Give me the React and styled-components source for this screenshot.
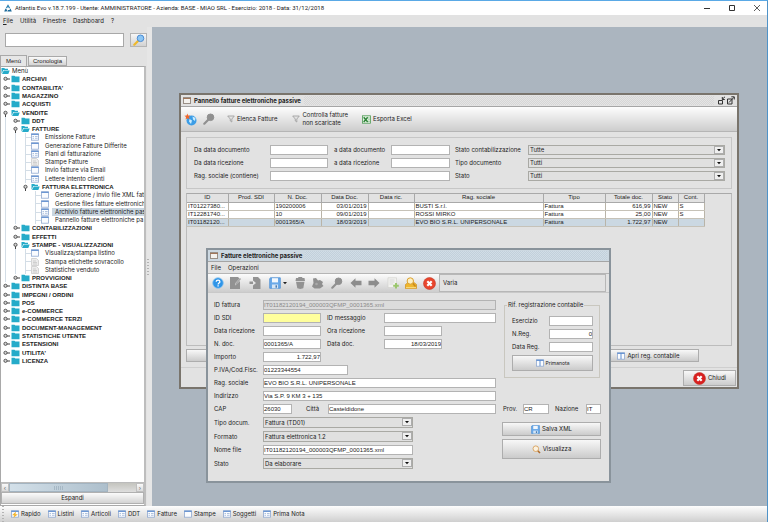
import React from 'react';
import styled, {createGlobalStyle} from 'styled-components';

const GlobalStyle = createGlobalStyle`
    * { box-sizing: border-box; }
    body { margin: 0; background: #e2e2e2; }
    body, button, input, select {
        font-family: Inter, "Liberation Sans", Arial, sans-serif;
        font-size: 6px;
        line-height: 8px;
        color: #222;
    }
    button, input, select { margin: 0; padding: 0; border-radius: 0; }
`;

const Page = styled.div`
    height: 100vh;
    display: flex;
    flex-direction: column;
    border-top: 1px solid #5aa9e6;
    border-right: 1px solid #4f93c8;
    overflow: hidden;
`;

const TitleBar = styled.header`
    flex: none;
    height: 14px;
    padding: 0 6px 0 4px;
    display: flex;
    align-items: center;
    gap: 3px;
    background: #fff;
    font-family: Roboto, "Open Sans", sans-serif;
`;

const WindowControls = styled.div`
    margin-left: auto;
    display: flex;
    gap: 17px;
`;

const ControlButton = styled.button`
    width: 8px;
    height: 8px;
    display: flex;
    background: none;
    border: 0;
`;

const MenuBar = styled.nav`
    flex: none;
    height: ${p => p.$height || 12}px;
    padding: 0 3px;
    display: flex;
    align-items: center;
    gap: 7px;
    background: #e2e2e2;
`;

const MenuLink = styled.button`
    background: none;
    border: 0;
    u { text-underline-offset: 1px; }
`;

const Main = styled.main`
    flex: 1;
    min-height: 0;
    display: flex;
`;

/* ---------- sidebar ---------- */

const Sidebar = styled.aside`
    flex: none;
    width: 147px;
    display: flex;
    flex-direction: column;
    background: #e2e2e2;
`;

const SearchRow = styled.form`
    flex: none;
    padding: 6px 0 8px 5px;
    display: flex;
    gap: 6px;
`;

const SearchInput = styled.input`
    flex: 1;
    min-width: 0;
    height: 14px;
    border: 1px solid #a8a8a8;
    background: #fff;
`;

const IconButton = styled.button`
    width: 17px;
    height: 14px;
    display: flex;
    align-items: center;
    justify-content: center;
    border: 1px solid #b4b4b4;
    background: linear-gradient(#f6f6f6, #d2d2d2);
`;

const Tabs = styled.div`
    flex: none;
    display: flex;
    align-items: flex-end;
    gap: 1px;
`;

const Tab = styled.button`
    height: ${p => p.$active ? '11px' : '10px'};
    padding: 0 ${p => p.$active ? 5 : 4}px;
    border: 1px solid #a9a9a9;
    border-bottom-width: ${p => p.$active ? 0 : '1px'};
    background: ${p => p.$active ? '#e6e6e6' : 'linear-gradient(#fafafa, #d4d4d4)'};
    font-family: "Liberation Sans", Arial, sans-serif;
`;

const TreePanel = styled.div`
    flex: 1;
    min-height: 0;
    margin-right: 1px;
    padding-bottom: 1px;
    display: flex;
    flex-direction: column;
    background: #fff;
    border: 1px solid #a9a9a9;
    border-right: 2px solid #bdbdbd;
    overflow: hidden;
`;

const Tree = styled.ul`
    height: 298px;
    margin: 0 0 auto;
    padding: 0;
    display: grid;
    grid-auto-rows: 1fr;
    list-style: none;
`;

const TreeItem = styled.li`
    min-height: 0;
    display: flex;
    align-items: center;
    white-space: nowrap;
    ${p => p.$folder && `
        font-family: "Liberation Sans", Arial, sans-serif;
        font-weight: bold;
    `}
    svg { flex: none; }
`;

const TreeGuide = styled.span`
    flex: none;
    align-self: stretch;
    width: 10px;
    ${p => p.$line && `
        background: linear-gradient(#d3dde6, #d3dde6) 4px 0 / 1px 100% no-repeat;
    `}
`;

const TreeBranch = styled(TreeGuide)`
    background:
        linear-gradient(#d3dde6, #d3dde6) 4px 0 / 1px 100% no-repeat,
        linear-gradient(#d3dde6, #d3dde6) 4px 4px / 6px 1px no-repeat;
`;

const TreeText = styled.span`
    margin-left: ${p => p.$leaf ? '3px' : '1px'};
    padding-left: ${p => p.$leaf ? '3px' : '1px'};
    ${p => p.$selected && `
        flex: 1;
        background: #c9d6e0;
    `}
`;

const ScrollBar = styled.div`
    flex: none;
    height: 10px;
    display: flex;
    border-top: 1px solid #bbb;
    background: linear-gradient(#c4c4be, #dedede);
`;

const ScrollThumb = styled.div`
    width: 99px;
    display: flex;
    align-items: center;
    justify-content: center;
    border: 1px solid #a3b4c1;
    background: linear-gradient(90deg, #d3e0e9, #adbfcc);
`;

const ThumbGrip = styled.span`
    width: 10px;
    height: 4px;
    background: repeating-linear-gradient(90deg, #a6b8c5 0 1px, transparent 1px 2px);
`;

const ScrollButton = styled.button`
    flex: none;
    width: 8px;
    margin-left: ${p => p.$end ? 'auto' : 0};
    border: 1px solid #bfbfbf;
    background: linear-gradient(#fafafa, #dadada);
    color: #666;
    line-height: 6px;
`;

const ExpandButton = styled.button`
    flex: none;
    height: 12px;
    border: 1px solid #b0b0b0;
    background: linear-gradient(#fbfbfb, #d3d3d3);
`;

const Splitter = styled.div`
    flex: none;
    width: 5px;
    display: flex;
    align-items: center;
    background: #e6e6e6;
`;

const Grip = styled.span`
    width: 2px;
    height: 16px;
    background: repeating-linear-gradient(#b3b3b3 0 1px, transparent 1px 3px);
`;

/* ---------- desktop and inner windows ---------- */

const Desktop = styled.section`
    flex: 1;
    position: relative;
    background: #abb5bf;
    overflow: hidden;
`;

const InnerWindow = styled.section`
    position: absolute;
    left: ${p => p.$x}px;
    top: ${p => p.$y}px;
    width: ${p => p.$width}px;
    display: flex;
    flex-direction: column;
    border: 2px solid ${p => p.$active ? '#89939b' : '#79746c'};
    background: #e2e2e2;
`;

const InnerTitle = styled.header`
    height: 12px;
    padding: 0 2px;
    display: flex;
    align-items: center;
    gap: 3px;
    border-bottom: 1px solid #a5a5a5;
    background: ${p => p.$active ? '#ccd8e1' : '#e2e2e2'};
    h2 {
        margin: 0;
        font-size: 6px;
        line-height: 8px;
    }
`;

const TitleTexture = styled.span`
    flex: 1;
    height: 9px;
    background: repeating-conic-gradient(${p => p.$active ? '#c2d0db 0 25%, #d1dde6 0 50%' : '#d6d6d6 0 25%, #e4e4e4 0 50%'}) 0 0 / 2px 2px;
`;

const ToolBar = styled.div`
    height: 25px;
    padding: 0 3px;
    display: flex;
    align-items: center;
    border-bottom: 1px solid #b5b5b5;
    background: linear-gradient(#fdfdfd, #cdcdcd);
`;

const ToolButton = styled.button`
    margin-left: ${p => p.$gap || 0}px;
    display: flex;
    align-items: center;
    gap: 2px;
    border: 0;
    background: none;
    text-align: left;
    white-space: nowrap;
`;

const PanelBody = styled.div`
    padding: 5px;
    display: flex;
    flex-direction: column;
`;

const FilterBox = styled.form`
    padding: 7px 6px 7px 7px;
    display: grid;
    grid-template-columns: 76px 58px 63px 59px 78px 1fr;
    grid-auto-rows: 10px;
    row-gap: 3px;
    align-items: center;
    border: 1px solid #c6c6c6;
`;

const FieldLabel = styled.label`
    flex: none;
    width: ${p => p.$width ? `${p.$width}px` : 'auto'};
    padding-left: ${p => p.$pad || 0}px;
    white-space: nowrap;
`;

const TextInput = styled.input`
    height: 10px;
    min-width: 0;
    width: ${p => p.$width ? `${p.$width}px` : '100%'};
    flex: ${p => p.$width ? 'none' : 1};
    grid-column: ${p => p.$span ? `span ${p.$span}` : 'auto'};
    border: 1px solid #b3b3b3;
    background: ${p => p.$fill || '#fff'};
    color: ${p => p.readOnly ? '#8a8a8a' : '#222'};
    text-align: ${p => p.$right ? 'right' : 'left'};
    font-family: "Liberation Sans", Arial, sans-serif;
`;

const SelectWrap = styled.span`
    position: relative;
    display: flex;
    width: ${p => p.$width ? `${p.$width}px` : '100%'};
    svg {
        position: absolute;
        right: 1px;
        top: 1px;
        pointer-events: none;
    }
`;

const SelectInput = styled.select`
    width: 100%;
    height: ${p => p.$tall ? 11 : 10}px;
    padding-left: 1px;
    appearance: none;
    border: 1px solid #a9a9a4;
    background: #e0e0e0;
`;

const TablePane = styled.div`
    height: 153px;
    margin-top: 4px;
    border: 1px solid #bcbcbc;
    border-top-color: #a9a9a9;
`;

const Table = styled.table`
    width: 517px;
    table-layout: fixed;
    border-collapse: collapse;
    font-family: "Liberation Sans", Arial, sans-serif;
    th, td {
        height: 8px;
        padding: 0 1px;
        line-height: 7px;
        border-right: 1px solid #b9b4a8;
        border-bottom: 1px solid #c6c2b8;
        overflow: hidden;
        white-space: nowrap;
    }
    th {
        font-weight: normal;
        border-color: #a9a9a9;
        background: #e2e2e2;
    }
`;

const TableRow = styled.tr`
    background: ${p => p.$selected ? '#cbd8e2' : '#fff'};
`;

const Cell = styled.td`
    text-align: ${p => p.$right ? 'right' : 'left'};
`;

const ActionRow = styled.div`
    margin-top: 3px;
    padding-right: 33px;
    display: flex;
    justify-content: space-between;
`;

const PushButton = styled.button`
    width: ${p => p.$width ? `${p.$width}px` : '100%'};
    height: ${p => p.$height}px;
    display: flex;
    align-items: center;
    justify-content: center;
    gap: 2px;
    border: 1px solid #adadad;
    background: linear-gradient(#f8f8f8, #cbcbcb);
    font-size: ${p => p.$small ? 5 : 6}px;
`;

const WindowFooter = styled.footer`
    height: 20px;
    padding: 2px 1px 1px;
    display: flex;
    justify-content: flex-end;
    border-top: 1px solid #cfcfcf;
`;

const FormToolBar = styled.div`
    height: 20px;
    padding-right: 3px;
    display: flex;
    border-top: 1px solid #b5b5b5;
    border-bottom: 1px solid #c9c9c9;
`;

const FormTools = styled.div`
    width: 231px;
    padding-left: 4px;
    display: grid;
    grid-template-columns: 12px 22px 17px 29px 16px 19px 19px 19px 18px 20px 16px 20px;
    align-items: center;
    justify-items: center;
    background: linear-gradient(#fcfcfc, #cdcdcd);
`;

const StatusBox = styled.div`
    flex: 1;
    padding: 4px 3px;
    border: 1px solid #b7b7b7;
`;

const FormBody = styled.div`
    padding: 7px 8px 12px 6px;
    display: flex;
    gap: 6px;
`;

const FormColumn = styled.form`
    flex: 1;
    min-width: 0;
    display: flex;
    flex-direction: column;
    gap: 3px;
`;

const FormRow = styled.div`
    display: flex;
    align-items: center;
`;

const SideColumn = styled.div`
    width: 99px;
    padding-top: 1px;
    display: flex;
    flex-direction: column;
`;

const GroupBox = styled.fieldset`
    min-width: 0;
    margin: 0 1px 26px 2px;
    padding: 7px 6px 6px 7px;
    display: flex;
    flex-direction: column;
    gap: 3px;
    border: 1px solid #c9c7bf;
    legend {
        margin-left: -5px;
        padding: 0 1px;
    }
`;

const ButtonStack = styled.div`
    margin-top: 8px;
    display: flex;
    flex-direction: column;
    gap: 3px;
`;

/* ---------- bottom bar ---------- */

const TaskBar = styled.footer`
    flex: none;
    height: 16px;
    padding-left: 2px;
    display: flex;
    align-items: center;
    gap: 7px;
    background: linear-gradient(#fdfdfd, #cfcfcf);
`;

/* ---------- icons ---------- */

const Logo = () => (
    <svg width="8" height="8" viewBox="0 0 8 8">
        <path d="M4 .3 6.300 4.300H4.900L4 2.700 3.100 4.300H1.700Z" fill="#2b7fb0" />
        <path d="M1.500 4.400 3.200 6 2.600 7.600H.2ZM6.500 4.400 7.800 7.600H3.200L4 5.900H5.400Z" fill="#1f6c9c" />
    </svg>
);

const Folder = ({open}) => (
    <svg width="9" height="8" viewBox="0 0 9 8">
        {open
            ? <path d="M.5 6.500V1H3.300L4 1.800H7V3H2.300L1 6ZM2.800 3.500H8.700L7.300 7H1Z" fill="#25abc9" />
            : <path d="M.5 .7H3.500L4.300 1.600H8.500V7.200H.5Z" fill="#25abc9" />}
    </svg>
);

const Handle = ({open}) => (
    <svg width="10" height="8" viewBox="0 0 10 8">
        <path d={open ? 'M4.500 5V8' : 'M6 4H9'} stroke="#444" />
        <circle cx="4.500" cy="3.800" r="1.600" fill="#d2d2d2" stroke="#4a4a4a" strokeWidth=".9" />
    </svg>
);

const FormIcon = ({kind = 'list'}) => (
    <svg width="8" height="8" viewBox="0 0 8 8">
        {kind === 'paper' ? (
            <>
                <path d="M.5.5H5.500L7.500 2.500V7.500H.5Z" fill="#ececec" stroke="#c6c6c6" strokeWidth=".7" />
                <path d="M2 3H5M2 4.500H6M2 6H6" stroke="#bcbcbc" strokeWidth=".6" />
            </>
        ) : (
            <>
                <rect x=".5" y=".8" width="7" height="6.400" fill="#fafcff" stroke="#8fa9d0" strokeWidth=".8" />
                <path d="M.3 1.300H7.700" stroke="#5f8ed0" strokeWidth="1.200" />
                {kind === 'list' && <path d="M1.500 3.500H3M1.500 5.300H3M4 3.500H6.600M4 5.300H6.600" stroke="#9db4d6" strokeWidth=".8" />}
                {kind === 'split' && <path d="M4 1V7" stroke="#5f8ed0" />}
                {kind === 'flash' && <path d="M5 1.500 1 5.200H3.300L2.300 8 6.900 4.200H4.500Z" fill="#f5b52a" />}
            </>
        )}
    </svg>
);

const WindowIcon = () => (
    <svg width="8" height="7" viewBox="0 0 8 7">
        <rect x=".5" y=".5" width="7" height="6" fill="#f4f2ee" stroke="#998f86" />
        <path d="M0 1.500H8" stroke="#a0765a" />
    </svg>
);

const Magnifier = ({size = 12, color = '#909090', glass = '#909090', handle = color}) => (
    <svg width={size} height={size} viewBox="0 0 12 12">
        <path d="M1.300 10.700 5.500 6.500" stroke={handle} strokeWidth="2.200" strokeLinecap="round" />
        <circle cx="7.500" cy="4.300" r="3.300" fill={glass} stroke={color} />
    </svg>
);

const LensIcon = () => (
    <svg width="9" height="9" viewBox="0 0 9 9">
        <path d="M5.500 5.500 8 8" stroke="#b06c2c" strokeWidth="1.600" />
        <circle cx="3.800" cy="3.700" r="2.800" fill="#fbf2e0" stroke="#d8a05c" strokeWidth=".9" />
    </svg>
);

const StarGlobe = () => (
    <svg width="13" height="13" viewBox="0 0 13 13">
        <circle cx="7.500" cy="7.500" r="5" fill="#3c9de6" />
        <path d="M5.500 6 8 7.500 7 11 5 8.500ZM8.500 3.500 11.500 5 11 8 9 6.500Z" fill="#c9ecff" />
        <path d="M3.300.5 4.200 2.500 6.300 2.400 4.900 4.100 5.600 6.200 3.500 5.200 1.600 6.400 2 4.100.4 2.700 2.600 2.500Z" fill="#f0662a" />
    </svg>
);

const Funnel = () => (
    <svg width="8" height="8" viewBox="0 0 8 8">
        <path d="M.7 1H7.300L4.800 4V7L3.300 6V4Z" fill="#e4e4e4" stroke="#9b9b9b" strokeWidth=".8" />
    </svg>
);

const ExcelIcon = () => (
    <svg width="9" height="9" viewBox="0 0 9 9">
        <rect x=".5" y=".8" width="8" height="7.400" fill="#e6f3e6" stroke="#4c9a52" strokeWidth=".8" />
        <path d="M6 3H8M6 4.700H8M6 6.400H8" stroke="#7fb884" strokeWidth=".6" />
        <path d="M1.700 2.300 5.700 6.900M5.700 2.300 1.700 6.900" stroke="#2f8439" strokeWidth="1.500" />
    </svg>
);

const HelpIcon = () => (
    <svg width="12" height="12" viewBox="0 0 12 12">
        <circle cx="6" cy="6" r="5.300" fill="#2f95e8" stroke="#8cc4ef" strokeWidth=".8" />
        <path d="M4.200 4.700C4.200 2.600 7.900 2.600 7.900 4.700 7.900 6 6.100 6 6.100 7.400M6.100 8.300V9.500" fill="none" stroke="#fff" strokeWidth="1.300" />
    </svg>
);

const EditIcon = () => (
    <svg width="12" height="12" viewBox="0 0 12 12">
        <path d="M1 0H9L10.500 1.500 6 6.500V8.500L11 4V12H1Z" fill="#929292" />
        <path d="M6.500 7.500 11.500 1.500" stroke="#a5a5a5" strokeWidth="1.300" />
    </svg>
);

const CopyIcon = () => (
    <svg width="12" height="12" viewBox="0 0 12 12">
        <path d="M4 0H9L11.500 2.500V12H4V8.500L7 6 4 3.500V4.500H.5V7H4Z" fill="#939393" />
    </svg>
);

const SaveIcon = ({size = 12}) => (
    <svg width={size} height={size} viewBox="0 0 12 12">
        <path d="M1.500.8H11.300V11.300H.7V1.600Z" fill="#6aa9e8" stroke="#4f90d4" strokeWidth=".8" />
        <rect x="3" y="1.200" width="6" height="4.200" fill="#f3f8fd" />
        <rect x="3" y="7.500" width="6" height="3.800" fill="#d4e5f5" />
        <rect x="6.500" y="8.300" width="1.500" height="2.400" fill="#4e7cae" />
    </svg>
);

const CaretIcon = () => (
    <svg width="4" height="3" viewBox="0 0 4 3">
        <path d="M0 0H4L2 2.300Z" fill="#222" />
    </svg>
);

const TrashIcon = () => (
    <svg width="12" height="12" viewBox="0 0 12 12">
        <path d="M2 1H4L4.500 0H8L8.500 1H10.500L11 4H1.500ZM2 4.700H10.500L9.300 11.300 6.200 12 3.300 11.300Z" fill="#929292" />
    </svg>
);

const ClusterIcon = () => (
    <svg width="13" height="12" viewBox="0 0 13 12">
        <path d="M2 1.500 5 1 7 3.500 9 3 12 5 11 7 12.500 9 9 11.500H3.500L1 9.500 2.500 6Z" fill="#8f8f8f" />
        <circle cx="5.500" cy="7" r="1.300" fill="#a9a9a9" />
    </svg>
);

const ArrowIcon = ({right}) => (
    <svg width="12" height="10" viewBox="0 0 12 10">
        <path d={right ? 'M11.500 5 6.500.3V2.800H.5V7.200H6.500V9.700Z' : 'M.5 5 5.500.3V2.800H11.500V7.200H5.500V9.700Z'} fill="#8d8d8d" />
    </svg>
);

const NoteIcon = () => (
    <svg width="12" height="12" viewBox="0 0 12 12">
        <path d="M1 .8H9.500V10.500H1Z" fill="#f2f2f0" stroke="#d2d2cf" strokeWidth=".7" />
        <path d="M2.500 3H7.500M2.500 5H7.500M2.500 7H6" stroke="#cfcfcf" strokeWidth=".7" />
        <path d="M9 6V11.500M6.200 8.800H11.800" stroke="#9ac66c" strokeWidth="1.900" />
    </svg>
);

const MailIcon = () => (
    <svg width="12" height="12" viewBox="0 0 12 12">
        <path d="M.5 7.500 3 5.500H9L11.500 7.500V11.500H.5Z" fill="#f0b72e" stroke="#cf8e1a" strokeWidth=".7" />
        <path d="M7.500 6 10.500 9.500" stroke="#c98a1c" strokeWidth="1.500" />
        <circle cx="5.300" cy="4" r="3.200" fill="#fdf0c4" stroke="#dba02c" />
        <path d="M1 10.700H11" stroke="#fbe08a" />
    </svg>
);

const CloseIcon = ({size = 13, fill = '#e8452c'}) => (
    <svg width={size} height={size} viewBox="0 0 13 13">
        <circle cx="6.500" cy="6.500" r="6" fill={fill} stroke="#c43a2c" strokeWidth=".6" />
        <path d="M4.300 4.300 8.700 8.700M8.700 4.300 4.300 8.700" stroke="#fff" strokeWidth="2.200" />
    </svg>
);

const SelectArrow = () => (
    <svg width="10" height="8" viewBox="0 0 10 8">
        <rect x=".5" y=".5" width="9" height="7" fill="#efefef" stroke="#adadad" />
        <path d="M3 3H7L5 5.300Z" fill="#111" />
    </svg>
);

const ResizeIcons = () => (
    <svg width="18" height="9" viewBox="0 0 18 9">
        <path d="M1.500 4.500H5.500V8H1.500ZM5 3.500 8 .8M5.300 1V3.500H7.800" fill="none" stroke="#333" />
        <path d="M10.500 3H15V8H10.500ZM12 6.500 17 1.200M14.300.8H17.300V3.500" fill="none" stroke="#333" />
    </svg>
);

/* ---------- data ---------- */

const TREE = [
    [1, 'ARCHIVI'],
    [1, 'CONTABILITA\''],
    [1, 'MAGAZZINO'],
    [1, 'ACQUISTI'],
    [1, 'VENDITE', 'open'],
    [2, 'DDT'],
    [2, 'FATTURE', 'open'],
    [3, 'Emissione Fatture', 'list'],
    [3, 'Generazione Fatture Differite', 'blank'],
    [3, 'Piani di fatturazione', 'list'],
    [3, 'Stampe Fatture', 'paper'],
    [3, 'Invio fatture via Email', 'blank'],
    [3, 'Lettere intento clienti', 'list'],
    [3, 'FATTURA ELETTRONICA', 'open'],
    [4, 'Generazione / invio file XML fatt', 'blank'],
    [4, 'Gestione files fatture elettronich', 'blank'],
    [4, 'Archivio fatture elettroniche pas', 'list'],
    [4, 'Pannello fatture elettroniche pa', 'blank'],
    [2, 'CONTABILIZZAZIONI'],
    [2, 'EFFETTI'],
    [2, 'STAMPE - VISUALIZZAZIONI', 'open'],
    [3, 'Visualizza/stampa listino', 'blank'],
    [3, 'Stampa etichette sovracollo', 'paper'],
    [3, 'Statistiche venduto', 'paper'],
    [2, 'PROVVIGIONI'],
    [1, 'DISTINTA BASE'],
    [1, 'IMPEGNI / ORDINI'],
    [1, 'POS'],
    [1, 'e-COMMERCE'],
    [1, 'e-COMMERCE TERZI'],
    [1, 'DOCUMENT-MANAGEMENT'],
    [1, 'STATISTICHE UTENTE'],
    [1, 'ESTENSIONI'],
    [1, 'UTILITA\''],
    [1, 'LICENZA'],
];

const SELECTED = 'Archivio fatture elettroniche pas';

const COLUMNS = [
    ['ID', 41], ['Prod. SDI', 46], ['N. Doc.', 47], ['Data Doc.', 47], ['Data ric.', 46],
    ['Rag. sociale', 129], ['Tipo', 62], ['Totale doc.', 47], ['Stato', 26], ['Cont.', 26],
];

const ROWS = [
    ['IT01227380...', '', '190200006', '03/01/2019', '', 'BUSTI S.r.l.', 'Fattura', '616,99', 'NEW', 'S'],
    ['IT12281740...', '', '10', '09/01/2019', '', 'ROSSI MIRKO', 'Fattura', '25,00', 'NEW', 'S'],
    ['IT01182120...', '', '0001365/A', '18/03/2019', '', 'EVO BIO S.R.L. UNIPERSONALE', 'Fattura', '1.722,97', 'NEW', ''],
];

const TASKS = [
    ['Rapido', 'flash'], ['Listini', 'list'], ['Articoli', 'list'], ['DDT', 'list'],
    ['Fatture', 'list'], ['Stampe', 'blank'], ['Soggetti', 'list'], ['Prima Nota', 'list'],
];

/* ---------- parts ---------- */

const Field = ({id, label, width, labelWidth = 49, pad, ...rest}) => (
    <>
        <FieldLabel htmlFor={id} $width={labelWidth} $pad={pad}>{label}</FieldLabel>
        <TextInput id={id} $width={width} {...rest} />
    </>
);

const SelectField = ({id, label, value, width, labelWidth, pad, tall}) => (
    <>
        <FieldLabel htmlFor={id} $width={labelWidth} $pad={pad}>{label}</FieldLabel>
        <SelectWrap $width={width}>
            <SelectInput id={id} $tall={tall} defaultValue={value}>
                <option>{value}</option>
            </SelectInput>
            <SelectArrow />
        </SelectWrap>
    </>
);

const TreeRow = ({level, label, kind}) => {
    const folder = !kind || kind === 'open';
    const guides = [];
    for (let i = 1; i < level; i++) guides.push(<TreeGuide key={i} $line={i < 3} />);
    return (
        <TreeItem $folder={folder}>
            {guides}
            {folder ? <Handle open={kind === 'open'} /> : <TreeBranch />}
            {folder ? <Folder open={kind === 'open'} /> : <FormIcon kind={kind} />}
            <TreeText $leaf={!folder} $selected={label === SELECTED}>{label}</TreeText>
        </TreeItem>
    );
};

const SidePanel = () => (
    <Sidebar>
        <SearchRow>
            <SearchInput aria-label="Cerca" />
            <IconButton type="button" aria-label="Cerca">
                <Magnifier color="#4b8bd3" glass="#8cc6f4" handle="#efb92c" />
            </IconButton>
        </SearchRow>
        <Tabs>
            <Tab $active>Menù</Tab>
            <Tab>Cronologia</Tab>
        </Tabs>
        <TreePanel>
            <Tree>
                <TreeItem>
                    <Folder open />
                    <TreeText>Menù</TreeText>
                </TreeItem>
                {TREE.map(([level, label, kind]) => (
                    <TreeRow key={label} level={level} label={label} kind={kind} />
                ))}
            </Tree>
            <ScrollBar>
                <ScrollButton aria-label="Indietro">‹</ScrollButton>
                <ScrollThumb><ThumbGrip /></ScrollThumb>
                <ScrollButton $end aria-label="Avanti">›</ScrollButton>
            </ScrollBar>
            <ExpandButton>Espandi</ExpandButton>
        </TreePanel>
    </Sidebar>
);

const InvoicePanel = () => (
    <InnerWindow $x={27} $y={66} $width={560}>
        <InnerTitle>
            <WindowIcon />
            <h2>Pannello fatture elettroniche passive</h2>
            <TitleTexture />
            <ResizeIcons />
        </InnerTitle>
        <ToolBar>
            <ToolButton aria-label="Nuovo"><StarGlobe /></ToolButton>
            <ToolButton $gap={6} aria-label="Cerca"><Magnifier /></ToolButton>
            <ToolButton $gap={12}><Funnel />Elenca Fatture</ToolButton>
            <ToolButton $gap={15}><Funnel /><span>Controlla fatture<br />non scaricate</span></ToolButton>
            <ToolButton $gap={14}><ExcelIcon />Esporta Excel</ToolButton>
        </ToolBar>
        <PanelBody>
            <FilterBox>
                <Field id="f-doc-from" label="Da data documento" />
                <Field id="f-doc-to" label="a data documento" pad={6} />
                <SelectField id="f-cont" label="Stato contabilizzazione" value="Tutte" pad={5} />
                <Field id="f-ric-from" label="Da data ricezione" />
                <Field id="f-ric-to" label="a data ricezione" pad={6} />
                <SelectField id="f-type" label="Tipo documento" value="Tutti" pad={5} />
                <Field id="f-name" label="Rag. sociale (contiene)" $span={3} />
                <SelectField id="f-state" label="Stato" value="Tutti" pad={5} />
            </FilterBox>
            <TablePane>
                <Table>
                    <colgroup>
                        {COLUMNS.map(([name, width]) => <col key={name} width={width} />)}
                    </colgroup>
                    <thead>
                        <tr>{COLUMNS.map(([name]) => <th key={name}>{name}</th>)}</tr>
                    </thead>
                    <tbody>
                        {ROWS.map((row, r) => (
                            <TableRow key={row[0]} $selected={r === 2}>
                                {row.map((text, c) => <Cell key={c} $right={c === 3 || c === 7}>{text}</Cell>)}
                            </TableRow>
                        ))}
                    </tbody>
                </Table>
            </TablePane>
            <ActionRow>
                <PushButton $width={101} $height={13} aria-label="Apri fattura" />
                <PushButton $width={101} $height={13}><FormIcon kind="split" />Apri reg. contabile</PushButton>
            </ActionRow>
        </PanelBody>
        <WindowFooter>
            <PushButton $width={53} $height={16}><CloseIcon fill="#d81f1f" />Chiudi</PushButton>
        </WindowFooter>
    </InnerWindow>
);

const InvoiceForm = () => (
    <InnerWindow $x={54} $y={221} $width={405} $active>
        <InnerTitle $active>
            <WindowIcon />
            <h2>Fatture elettroniche passive</h2>
            <TitleTexture $active />
        </InnerTitle>
        <MenuBar $height={11}>
            <MenuLink>File</MenuLink>
            <MenuLink>Operazioni</MenuLink>
        </MenuBar>
        <FormToolBar>
            <FormTools>
                <ToolButton aria-label="Aiuto"><HelpIcon /></ToolButton>
                <ToolButton aria-label="Modifica"><EditIcon /></ToolButton>
                <ToolButton aria-label="Copia"><CopyIcon /></ToolButton>
                <ToolButton aria-label="Salva"><SaveIcon /><CaretIcon /></ToolButton>
                <ToolButton aria-label="Elimina"><TrashIcon /></ToolButton>
                <ToolButton aria-label="Strumenti"><ClusterIcon /></ToolButton>
                <ToolButton aria-label="Cerca"><Magnifier /></ToolButton>
                <ToolButton aria-label="Precedente"><ArrowIcon /></ToolButton>
                <ToolButton aria-label="Successivo"><ArrowIcon right /></ToolButton>
                <ToolButton aria-label="Nota"><NoteIcon /></ToolButton>
                <ToolButton aria-label="Email"><MailIcon /></ToolButton>
                <ToolButton aria-label="Esci"><CloseIcon /></ToolButton>
            </FormTools>
            <StatusBox>Varia</StatusBox>
        </FormToolBar>
        <FormBody>
            <FormColumn>
                <FormRow>
                    <Field id="i-id" label="ID fattura" $fill="#dcdcdc" readOnly defaultValue="IT01182120194_000003QFMP_0001365.xml" />
                </FormRow>
                <FormRow>
                    <Field id="i-sdi" label="ID SDI" width={58} $fill="#ffff9c" />
                    <Field id="i-msg" label="ID messaggio" labelWidth={63} pad={6} />
                </FormRow>
                <FormRow>
                    <Field id="i-date" label="Data ricezione" width={58} />
                    <Field id="i-time" label="Ora ricezione" labelWidth={63} pad={6} width={58} />
                </FormRow>
                <FormRow>
                    <Field id="i-ndoc" label="N. doc." width={58} defaultValue="0001365/A" />
                    <Field id="i-ddoc" label="Data doc." labelWidth={63} pad={6} width={58} $right defaultValue="18/03/2019" />
                </FormRow>
                <FormRow>
                    <Field id="i-amount" label="Importo" width={58} $right defaultValue="1.722,97" />
                </FormRow>
                <FormRow>
                    <Field id="i-vat" label="P.IVA/Cod.Fisc." width={85} defaultValue="01223344554" />
                </FormRow>
                <FormRow>
                    <Field id="i-name" label="Rag. sociale" defaultValue="EVO BIO S.R.L. UNIPERSONALE" />
                </FormRow>
                <FormRow>
                    <Field id="i-addr" label="Indirizzo" defaultValue="Via S.P. 9 KM 3 + 135" />
                </FormRow>
                <FormRow>
                    <Field id="i-cap" label="CAP" width={29} defaultValue="26030" />
                    <Field id="i-city" label="Città" labelWidth={36} pad={14} defaultValue="Casteldidone" />
                </FormRow>
                <FormRow>
                    <SelectField id="i-type" label="Tipo docum." labelWidth={49} width={150} tall value="Fattura (TD01)" />
                </FormRow>
                <FormRow>
                    <SelectField id="i-format" label="Formato" labelWidth={49} width={150} tall value="Fattura elettronica 1.2" />
                </FormRow>
                <FormRow>
                    <Field id="i-file" label="Nome file" width={150} defaultValue="IT01182120194_000003QFMP_0001365.xml" />
                </FormRow>
                <FormRow>
                    <SelectField id="i-state" label="Stato" labelWidth={49} width={150} tall value="Da elaborare" />
                </FormRow>
            </FormColumn>
            <SideColumn>
                <GroupBox>
                    <legend>Rif. registrazione contabile</legend>
                    <FormRow>
                        <Field id="r-year" label="Esercizio" labelWidth={37} />
                    </FormRow>
                    <FormRow>
                        <Field id="r-num" label="N.Reg." labelWidth={37} $right defaultValue="0" />
                    </FormRow>
                    <FormRow>
                        <Field id="r-date" label="Data Reg." labelWidth={37} />
                    </FormRow>
                    <PushButton $height={16} $small><FormIcon kind="split" />Primanota</PushButton>
                </GroupBox>
                <FormRow>
                    <Field id="i-prov" label="Prov." labelWidth={21} pad={1} width={26} defaultValue="CR" />
                    <Field id="i-nation" label="Nazione" labelWidth={37} pad={6} defaultValue="IT" />
                </FormRow>
                <ButtonStack>
                    <PushButton $height={14}><SaveIcon size={9} />Salva XML</PushButton>
                    <PushButton $height={20}><LensIcon />Visualizza</PushButton>
                </ButtonStack>
            </SideColumn>
        </FormBody>
    </InnerWindow>
);

export default function App() {
    return (
        <Page>
            <GlobalStyle />
            <TitleBar>
                <Logo />
                <span>Atlantis Evo v.18.7.199 - Utente: AMMINISTRATORE - Azienda: BASE - MIAO SRL - Esercizio: 2018 - Data: 31/12/2018</span>
                <WindowControls>
                    <ControlButton aria-label="Riduci"><svg width="8" height="8"><path d="M1 4.500H7" stroke="#333" /></svg></ControlButton>
                    <ControlButton aria-label="Ingrandisci"><svg width="8" height="8"><path d="M1.500 1.500H6.500V6.500H1.500Z" fill="none" stroke="#333" /></svg></ControlButton>
                    <ControlButton aria-label="Chiudi"><svg width="8" height="8"><path d="M1 1 7 7M7 1 1 7" stroke="#333" strokeWidth=".8" /></svg></ControlButton>
                </WindowControls>
            </TitleBar>
            <MenuBar>
                <MenuLink><u>F</u>ile</MenuLink>
                <MenuLink>Utilità</MenuLink>
                <MenuLink>Finestre</MenuLink>
                <MenuLink>Dashboard</MenuLink>
                <MenuLink>?</MenuLink>
            </MenuBar>
            <Main>
                <SidePanel />
                <Splitter><Grip /></Splitter>
                <Desktop>
                    <InvoicePanel />
                    <InvoiceForm />
                </Desktop>
            </Main>
            <TaskBar>
                <Grip />
                {TASKS.map(([label, kind]) => (
                    <ToolButton key={label}><FormIcon kind={kind} />{label}</ToolButton>
                ))}
            </TaskBar>
        </Page>
    );
}
